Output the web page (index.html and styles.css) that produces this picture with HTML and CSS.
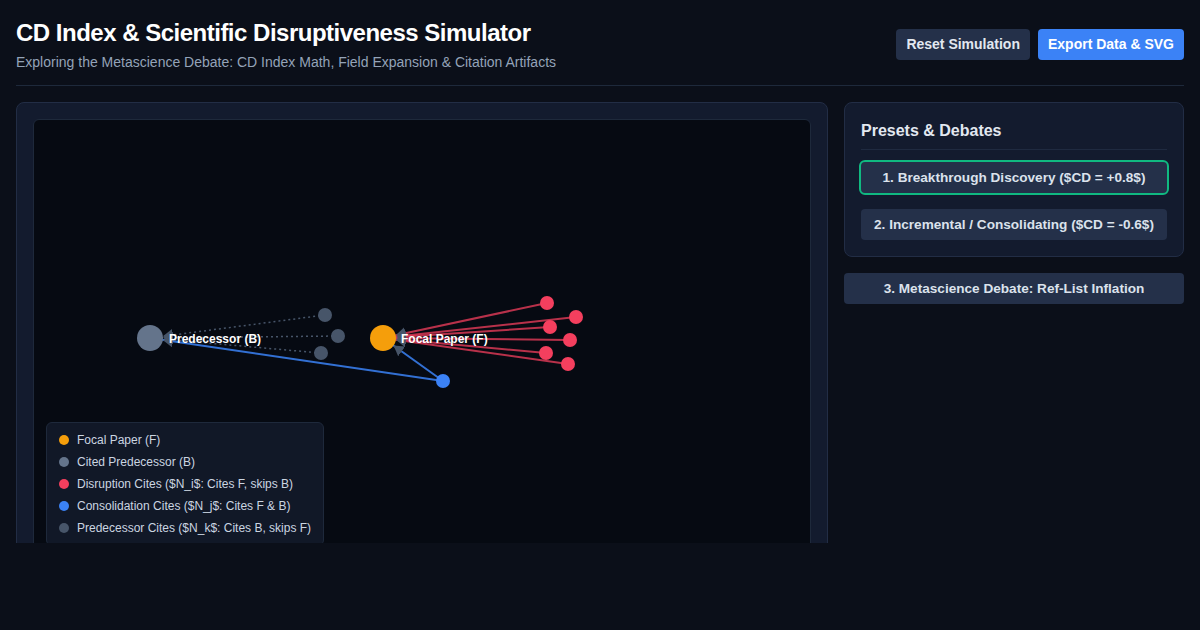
FILE: index.html
```html
<!DOCTYPE html>
<html lang="en">
<head>
<meta charset="utf-8">
<title>CD Index Simulator</title>
<link rel="stylesheet" href="styles.css">
</head>
<body>
<div class="app">
  <header class="header">
    <div class="titles">
      <h1 class="title">CD Index &amp; Scientific Disruptiveness Simulator</h1>
      <p class="subtitle">Exploring the Metascience Debate: CD Index Math, Field Expansion &amp; Citation Artifacts</p>
    </div>
    <div class="actions">
      <button class="btn btn-dark">Reset Simulation</button>
      <button class="btn btn-blue">Export Data &amp; SVG</button>
    </div>
  </header>
  <main class="main">
    <section class="panel">
      <div class="canvas">
        <svg class="graph" width="776" height="500" viewBox="0 0 776 500">
          <defs>
            <marker id="arr" viewBox="0 -6 10 12" refX="23" refY="0" markerWidth="10" markerHeight="12" markerUnits="userSpaceOnUse" orient="auto">
              <path d="M0,-6L10,0L0,6Z" fill="#475569"/>
            </marker>
          </defs>
          <g class="links">
            <line class="l-pred" x1="291" y1="195" x2="116" y2="218" marker-end="url(#arr)"/>
            <line class="l-pred" x1="304" y1="216" x2="116" y2="218" marker-end="url(#arr)"/>
            <line class="l-pred" x1="287" y1="233" x2="116" y2="218" marker-end="url(#arr)"/>
            <line class="l-dis" x1="513" y1="183" x2="349" y2="218" marker-end="url(#arr)"/>
            <line class="l-dis" x1="542" y1="197" x2="349" y2="218" marker-end="url(#arr)"/>
            <line class="l-dis" x1="516" y1="207" x2="349" y2="218" marker-end="url(#arr)"/>
            <line class="l-dis" x1="536" y1="220" x2="349" y2="218" marker-end="url(#arr)"/>
            <line class="l-dis" x1="512" y1="233" x2="349" y2="218" marker-end="url(#arr)"/>
            <line class="l-dis" x1="534" y1="244" x2="349" y2="218" marker-end="url(#arr)"/>
            <line class="l-con" x1="409" y1="261" x2="349" y2="218" marker-end="url(#arr)"/>
            <line class="l-con" x1="409" y1="261" x2="116" y2="218" marker-end="url(#arr)"/>
          </g>
          <g class="nodes">
            <circle cx="116" cy="218" r="13" fill="#64748b"/>
            <circle cx="349" cy="218" r="13" fill="#f59e0b"/>
            <circle cx="291" cy="195" r="7" fill="#475569"/>
            <circle cx="304" cy="216" r="7" fill="#475569"/>
            <circle cx="287" cy="233" r="7" fill="#475569"/>
            <circle cx="513" cy="183" r="7" fill="#f43f5e"/>
            <circle cx="542" cy="197" r="7" fill="#f43f5e"/>
            <circle cx="516" cy="207" r="7" fill="#f43f5e"/>
            <circle cx="536" cy="220" r="7" fill="#f43f5e"/>
            <circle cx="512" cy="233" r="7" fill="#f43f5e"/>
            <circle cx="534" cy="244" r="7" fill="#f43f5e"/>
            <circle cx="409" cy="261" r="7" fill="#3b82f6"/>
          </g>
          <g class="labels">
            <text x="135" y="222.5">Predecessor (B)</text>
            <text x="367" y="222.5">Focal Paper (F)</text>
          </g>
        </svg>
        <div class="legend">
          <div class="legend-row"><span class="dot dot-focal"></span>Focal Paper (F)</div>
          <div class="legend-row"><span class="dot dot-pred"></span>Cited Predecessor (B)</div>
          <div class="legend-row"><span class="dot dot-dis"></span>Disruption Cites ($N_i$: Cites F, skips B)</div>
          <div class="legend-row"><span class="dot dot-con"></span>Consolidation Cites ($N_j$: Cites F &amp; B)</div>
          <div class="legend-row"><span class="dot dot-pc"></span>Predecessor Cites ($N_k$: Cites B, skips F)</div>
        </div>
      </div>
    </section>
    <aside class="side">
      <div class="card">
        <h2 class="card-title">Presets &amp; Debates</h2>
        <div class="presets">
          <button class="preset preset-active">1. Breakthrough Discovery ($CD = +0.8$)</button>
          <button class="preset">2. Incremental / Consolidating ($CD = -0.6$)</button>
        </div>
      </div>
      <button class="preset preset-wide">3. Metascience Debate: Ref-List Inflation</button>
    </aside>
  </main>
</div>
</body>
</html>
```

FILE: styles.css
```css
* { box-sizing: border-box; }
html, body { margin: 0; padding: 0; }
body {
  background: #0b0f19;
  font-family: "Liberation Sans", Arial, sans-serif;
  color: #e2e8f0;
}
.app {
  height: 543px;
  overflow: hidden;
  padding: 16px 16px 0;
}
.header {
  display: flex;
  justify-content: space-between;
  align-items: center;
  padding-bottom: 13px;
  border-bottom: 1px solid #1e293b;
}
.title {
  margin: 0;
  font-size: 24px;
  line-height: 34px;
  font-weight: 700;
  color: #ffffff;
  letter-spacing: -0.5px;
}
.subtitle {
  margin: 2px 0 0;
  font-size: 14px;
  line-height: 20px;
  color: #94a3b8;
}
.actions {
  display: flex;
  gap: 8px;
}
.btn {
  height: 31px;
  padding: 0 10px;
  border: none;
  border-radius: 4px;
  font-family: "Liberation Sans", Arial, sans-serif;
  font-size: 14px;
  font-weight: 700;
  color: #e2e8f0;
}
.btn-dark { background: #243049; }
.btn-blue { background: #3b82f6; color: #ffffff; }
.main {
  display: flex;
  gap: 16px;
  margin-top: 16px;
  align-items: flex-start;
}
.panel {
  flex: 0 0 812px;
  background: #131b2e;
  border: 1px solid #222d45;
  border-radius: 8px;
  padding: 16px;
}
.canvas {
  position: relative;
  height: 520px;
  background: #060a12;
  border: 1px solid #1e293b;
  border-radius: 6px;
  overflow: hidden;
}
.graph { display: block; }
.l-pred { stroke: #475569; stroke-width: 1.5; stroke-dasharray: 2 3; }
.l-dis { stroke: #f43f5e; stroke-width: 2; stroke-opacity: 0.75; }
.l-con { stroke: #3b82f6; stroke-width: 2; stroke-opacity: 0.85; }
.labels text {
  font-family: "Liberation Sans", Arial, sans-serif;
  font-size: 12px;
  font-weight: 700;
  fill: #ffffff;
}
.legend {
  position: absolute;
  left: 12px;
  top: 302px;
  background: #111827;
  border: 1px solid #1e293b;
  border-radius: 6px;
  padding: 6px 12px;
}
.legend-row {
  display: flex;
  align-items: center;
  gap: 8px;
  font-size: 12px;
  line-height: 22px;
  color: #cbd5e1;
  white-space: nowrap;
}
.dot { width: 10px; height: 10px; border-radius: 50%; display: inline-block; }
.dot-focal { background: #f59e0b; }
.dot-pred { background: #64748b; }
.dot-dis { background: #f43f5e; }
.dot-con { background: #3b82f6; }
.dot-pc { background: #475569; }
.side {
  flex: 1;
  display: flex;
  flex-direction: column;
  gap: 16px;
}
.card {
  background: #131b2e;
  border: 1px solid #222d45;
  border-radius: 8px;
  padding: 16px;
}
.card-title {
  margin: 0;
  padding-bottom: 6px;
  border-bottom: 1px solid #1f2a40;
  font-size: 16px;
  line-height: 24px;
  font-weight: 700;
  color: #e2e8f0;
}
.presets {
  display: flex;
  flex-direction: column;
  gap: 14px;
  margin-top: 10px;
}
.preset {
  height: 31px;
  width: 100%;
  border: none;
  border-radius: 4px;
  background: #243049;
  font-family: "Liberation Sans", Arial, sans-serif;
  font-size: 13.6px;
  font-weight: 700;
  color: #dbe2ec;
}
.preset-active {
  height: 35px;
  width: calc(100% + 4px);
  margin: 0 -2px;
  border: 2px solid #10b981;
  border-radius: 6px;
}
```
